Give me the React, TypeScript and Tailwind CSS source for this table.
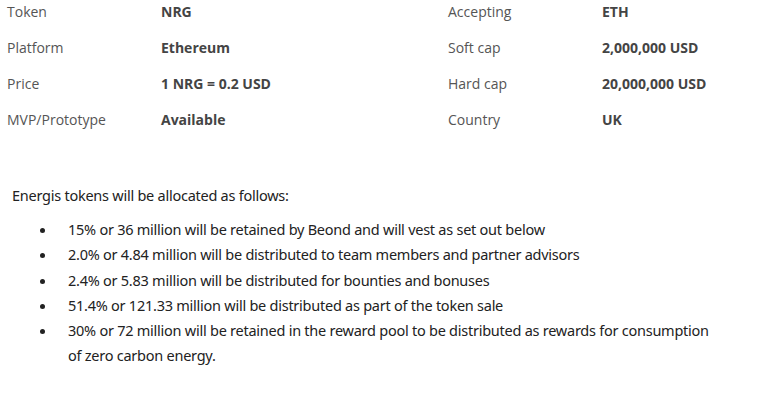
const ROWS = [
  ["Token", "NRG", "Accepting", "ETH"],
  ["Platform", "Ethereum", "Soft cap", "2,000,000 USD"],
  ["Price", "1 NRG = 0.2 USD", "Hard cap", "20,000,000 USD"],
  ["MVP/Prototype", "Available", "Country", "UK"],
];

const ITEMS = [
  "15% or 36 million will be retained by Beond and will vest as set out below",
  "2.0% or 4.84 million will be distributed to team members and partner advisors",
  "2.4% or 5.83 million will be distributed for bounties and bonuses",
  "51.4% or 121.33 million will be distributed as part of the token sale",
  "30% or 72 million will be retained in the reward pool to be distributed as rewards for consumption of zero carbon energy.",
];

export default function App() {
  return (
    <div className="w-[758px] h-[410px] bg-white overflow-hidden">
      {/* token details */}
      <div
        className="grid grid-cols-[154px_287px_154px_1fr] gap-y-3 pl-[7px] text-[14px] leading-6"
        style={{ fontFamily: '"Open Sans", sans-serif' }}
      >
        {ROWS.map((r) => (
          <div key={r[0]} className="contents">
            <div className="text-[#555]">{r[0]}</div>
            <div className="font-bold text-[#444]">{r[1]}</div>
            <div className="text-[#555]">{r[2]}</div>
            <div className="font-bold text-[#444]">{r[3]}</div>
          </div>
        ))}
      </div>

      {/* allocation */}
      <div
        className="mt-[51px] pl-3 text-[#222] text-[14.5px] tracking-[-0.25px]"
        style={{ fontFamily: '"Noto Sans", sans-serif' }}
      >
        <p className="leading-6">Energis tokens will be allocated as follows:</p>
        <ul className="mt-[10px] pr-10">
          {ITEMS.map((t) => (
            <li key={t} className="flex leading-[25.3px]">
              <span className="w-[56px] shrink-0 flex justify-end pr-[23px] pt-[11px]">
                <span className="block w-[5px] h-[5px] rounded-full bg-[#222]" />
              </span>
              <span>{t}</span>
            </li>
          ))}
        </ul>
      </div>
    </div>
  );
}
